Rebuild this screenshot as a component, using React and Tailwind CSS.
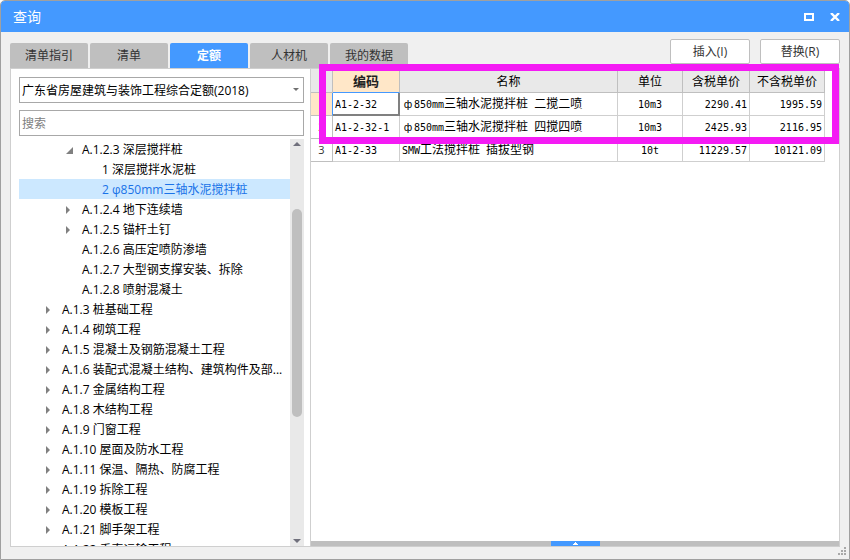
import { useState } from "react"

const tabs = ["清单指引", "清单", "定额", "人材机", "我的数据"]

const tree = [
    { label: "A.1.2.3 深层搅拌桩", level: 2, arrow: "open" },
    { label: "1 深层搅拌水泥桩", level: 3 },
    { label: "2 φ850mm三轴水泥搅拌桩", level: 3 },
    { label: "A.1.2.4 地下连续墙", level: 2, arrow: "closed" },
    { label: "A.1.2.5 锚杆土钉", level: 2, arrow: "closed" },
    { label: "A.1.2.6 高压定喷防渗墙", level: 2 },
    { label: "A.1.2.7 大型钢支撑安装、拆除", level: 2 },
    { label: "A.1.2.8 喷射混凝土", level: 2 },
    { label: "A.1.3 桩基础工程", level: 1, arrow: "closed" },
    { label: "A.1.4 砌筑工程", level: 1, arrow: "closed" },
    { label: "A.1.5 混凝土及钢筋混凝土工程", level: 1, arrow: "closed" },
    { label: "A.1.6 装配式混凝土结构、建筑构件及部...", level: 1, arrow: "closed" },
    { label: "A.1.7 金属结构工程", level: 1, arrow: "closed" },
    { label: "A.1.8 木结构工程", level: 1, arrow: "closed" },
    { label: "A.1.9 门窗工程", level: 1, arrow: "closed" },
    { label: "A.1.10 屋面及防水工程", level: 1, arrow: "closed" },
    { label: "A.1.11 保温、隔热、防腐工程", level: 1, arrow: "closed" },
    { label: "A.1.19 拆除工程", level: 1, arrow: "closed" },
    { label: "A.1.20 模板工程", level: 1, arrow: "closed" },
    { label: "A.1.21 脚手架工程", level: 1, arrow: "closed" },
    { label: "A.1.22 垂直运输工程", level: 1, arrow: "closed" },
]

const indent = { 1: "pl-6", 2: "pl-11", 3: "pl-16" }

const rows = [
    { code: "A1-2-32", name: "ф850mm三轴水泥搅拌桩 二搅二喷", unit: "10m3", taxed: "2290.41", untaxed: "1995.59" },
    { code: "A1-2-32-1", name: "ф850mm三轴水泥搅拌桩 四搅四喷", unit: "10m3", taxed: "2425.93", untaxed: "2116.95" },
    { code: "A1-2-33", name: "SMW工法搅拌桩 插拔型钢", unit: "10t", taxed: "11229.57", untaxed: "10121.09" },
]

const cell = "border-r border-b border-[#cfcfcf] px-[2px] pb-px whitespace-nowrap"
const head = "border-r border-b border-[#bfbfbf] p-0 font-normal"

// latin runs use a smaller monospace so they are half as wide as the hanzi
function GridText({ text }){
    return text.split(/([\x20-\x7e]+)/).map((part, i) => (
        /^[\x20-\x7e]+$/.test(part)
            ? <span key={i} className="font-['DejaVu_Sans_Mono',monospace] text-[10px] whitespace-pre">{part}</span>
            : part === "ф"
                ? <span key={i} className="inline-block w-3 text-center font-['DejaVu_Sans',sans-serif] text-[10px]">{part}</span>
                : <span key={i}>{part}</span>
    ))
}

function TreeArrow({ type }){
    if(type === "open"){
        return <svg className="w-[7px] h-[7px]" viewBox="0 0 7 7" aria-hidden="true"><path d="M7 0v7H0z" fill="#808080" /></svg>
    }
    if(type === "closed"){
        return <svg className="w-1 h-2" viewBox="0 0 4 8" aria-hidden="true"><path d="M0 0l4 4-4 4z" fill="#808080" /></svg>
    }
    return null
}

function Sidebar(){
    const [selected, setSelected] = useState(2)

    return(
        <aside className="w-[300px] shrink-0 flex flex-col border-l border-t border-b border-[#cfcfcf] bg-white pl-2 pt-2">
            <div className="relative mr-[6px] mb-[7px]">
                <select aria-label="定额库" className="block appearance-none w-full h-[26px] border border-[#a8a8a8] bg-white pl-[2px] pt-px text-black">
                    <option>广东省房屋建筑与装饰工程综合定额(2018)</option>
                </select>
                <svg className="absolute right-[5px] top-[11px] w-[6px] h-[3px] pointer-events-none" viewBox="0 0 6 3" aria-hidden="true"><path d="M0 0h6L3 3z" fill="#707070" /></svg>
            </div>
            <input aria-label="搜索" placeholder="搜索" className="block mr-[6px] h-[26px] border border-[#a8a8a8] bg-white pl-[2px] placeholder:text-[#808080]" />

            <div className="mt-[3px] mr-[6px] flex flex-1 min-h-0">
                <ul role="tree" className="flex-1 min-w-0 overflow-hidden">
                    {tree.map((item, i) => (
                        <li key={item.label} role="treeitem" aria-selected={i === selected}>
                            <button
                                onClick={() => setSelected(i)}
                                className={`flex items-center w-full h-5 pt-[2px] text-left whitespace-nowrap ${indent[item.level]} ${i === selected ? "bg-[#cce8ff] text-[#1a73e8]" : "text-black"}`}>
                                <span className="w-[19px] shrink-0 flex items-center pl-[3px]"><TreeArrow type={item.arrow} /></span>
                                <span>{item.label}</span>
                            </button>
                        </li>
                    ))}
                </ul>
                <div className="w-[14px] shrink-0 flex flex-col items-center bg-[#e9e9e9] pt-[3px] pb-[3px]">
                    <svg className="w-2 h-1 shrink-0" viewBox="0 0 8 4" aria-hidden="true"><path d="M0 4h8L4 0z" fill="#70707c" /></svg>
                    <div className="flex-[63] min-h-0"></div>
                    <div className="flex-[208] min-h-0 w-[10px] rounded-full bg-[#bfbfbf]"></div>
                    <div className="flex-[122] min-h-0"></div>
                    <svg className="w-2 h-1 shrink-0" viewBox="0 0 8 4" aria-hidden="true"><path d="M0 0h8L4 4z" fill="#70707c" /></svg>
                </div>
            </div>
        </aside>
    )
}

function QuotaTable(){
    return(
        <table className="table-fixed w-[514px] border-separate border-spacing-0 font-['Noto_Sans_CJK_SC',sans-serif] text-black">
            <colgroup>
                <col className="w-[22px]" />
                <col className="w-[67px]" />
                <col className="w-[218px]" />
                <col className="w-[65px]" />
                <col className="w-[67px]" />
                <col className="w-[75px]" />
            </colgroup>
            <thead>
                <tr className="h-6 bg-[#e9e9e9]">
                    <th className={head}></th>
                    <th className="border-r border-b border-[#bfbfbf] border-b-[#4499ff] p-0 bg-[#ffe7c8] text-[13px] font-bold text-[#222222]">编码</th>
                    <th className={head}>名称</th>
                    <th className={head}>单位</th>
                    <th className={head}>含税单价</th>
                    <th className={head}>不含税单价</th>
                </tr>
            </thead>
            <tbody>
                {rows.map((row, i) => (
                    <tr key={row.code} className="h-[23px]">
                        <th scope="row" className={`border-r border-b border-[#bfbfbf] p-0 font-['Open_Sans',sans-serif] font-normal text-[11px] text-[#333333] ${i === 0 ? "bg-[#ffe7c8] border-r-[#4499ff]" : ""}`}>{i + 1}</th>
                        <td className={i === 0 ? "border-r-2 border-b-2 border-[#808080] pl-[2px] whitespace-nowrap" : cell}><GridText text={row.code} /></td>
                        <td className={cell}><GridText text={row.name} /></td>
                        <td className={`${cell} text-center`}><GridText text={row.unit} /></td>
                        <td className={`${cell} text-right`}><GridText text={row.taxed} /></td>
                        <td className={`${cell} text-right`}><GridText text={row.untaxed} /></td>
                    </tr>
                ))}
            </tbody>
        </table>
    )
}

function App(){
    const [active, setActive] = useState("定额")

    return(
        <div className="h-screen flex flex-col overflow-hidden rounded-t-[5px] border border-[#a0a0a0] bg-[#f0f0f0] font-['Open_Sans','Noto_Sans_CJK_SC',sans-serif] text-xs leading-4">
            {/* Title bar */}
            <header className="h-[31px] shrink-0 flex items-center justify-between bg-[#4499ff] pl-3 pr-[9px] text-white">
                <h1 className="text-sm pt-px">查询</h1>
                <div className="flex items-center gap-4">
                    <button aria-label="最大化">
                        <svg className="w-[10px] h-2" viewBox="0 0 10 8"><path d="M1 1h8v6H1z" fill="none" stroke="white" strokeWidth="2" /></svg>
                    </button>
                    <button aria-label="关闭">
                        <svg className="w-[10px] h-2" viewBox="0 0 10 8"><path d="M1 0l8 8M9 0L1 8" fill="none" stroke="white" strokeWidth="2.400" /></svg>
                    </button>
                </div>
            </header>

            {/* Tabs and actions */}
            <div className="h-9 shrink-0 flex items-end justify-between px-[9px]">
                <div role="tablist" className="flex gap-[2px]">
                    {tabs.map((tab) => (
                        <button
                            key={tab}
                            role="tab"
                            aria-selected={tab === active}
                            onClick={() => setActive(tab)}
                            className={`w-[78px] h-[25px] rounded-t-[2px] pt-px ${tab === active ? "bg-[#4499ff] text-white font-bold" : "bg-[#bfbfbf] text-[#333333]"}`}>
                            {tab}
                        </button>
                    ))}
                </div>
                <div className="flex gap-[10px] self-start pt-[7px]">
                    <button className="w-20 h-[25px] rounded-[2px] border border-[#bfbfbf] bg-white text-[#333333]">插入(I)</button>
                    <button className="w-20 h-[25px] rounded-[2px] border border-[#bfbfbf] bg-white text-[#333333]">替换(R)</button>
                </div>
            </div>

            <div className="flex flex-1 min-h-0 px-[9px] pb-3">
                <Sidebar />
                <main className="relative flex-1 min-w-0 flex flex-col border border-[#cfcfcf] bg-white">
                    <QuotaTable />
                    <div className="mt-auto h-[5px] flex bg-[#bfbfbf]">
                        <button aria-label="展开" className="mx-auto w-[49px] h-[5px] flex items-center justify-center bg-[#4499ff]">
                            <svg className="w-[5px] h-[3px]" viewBox="0 0 5 3"><path d="M0 3V2h1V1h1V0h1v1h1v1h1v1z" fill="white" /></svg>
                        </button>
                    </div>
                    {/* highlight over the matching rows */}
                    <div className="absolute left-2 right-0 -top-[5px] h-20 border-7 border-[#f41bf4] pointer-events-none"></div>
                </main>
            </div>

            {/* resize grip */}
            <svg className="absolute right-1 bottom-[5px] w-2 h-2" viewBox="0 0 8 8" aria-hidden="true">
                <path d="M6 0h2v2H6zM3 3h2v2H3zM6 3h2v2H6zM0 6h2v2H0zM3 6h2v2H3zM6 6h2v2H6z" fill="#a8a8a8" />
            </svg>
        </div>
    )
}

export default App
